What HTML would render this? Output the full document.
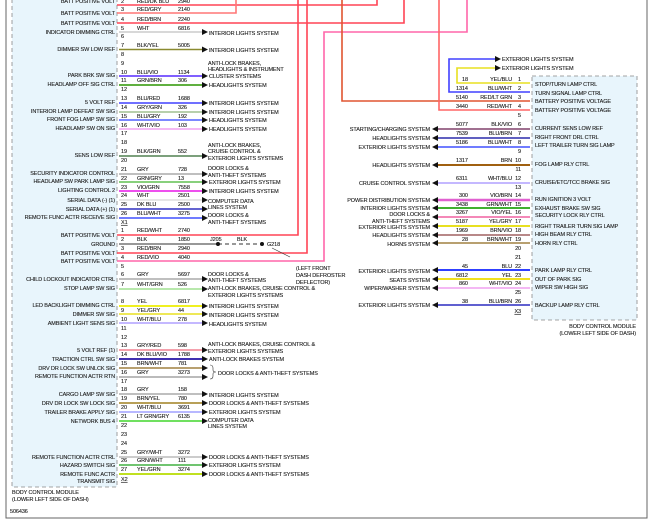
<!DOCTYPE html>
<html><head><meta charset="utf-8"><style>
html,body{margin:0;padding:0;background:#fff;width:650px;height:520px;overflow:hidden}
svg{display:block}
text{font-family:"Liberation Sans",sans-serif;font-size:5.5px;fill:#222;stroke:#222;stroke-width:0.12;letter-spacing:-0.1px}
.e{text-anchor:end}
.w{fill:none;stroke-width:1.6}
</style></head><body>
<svg width="650" height="520" viewBox="0 0 650 520" xmlns="http://www.w3.org/2000/svg">
<path d="M6 0V518H647V0" fill="none" stroke="#666" stroke-width="1"/>
<rect x="12" y="-2" width="105" height="489" fill="#e8f5fc" stroke="#888" stroke-dasharray="4,3" stroke-width="0.8"/>
<text x="12" y="494">BODY CONTROL MODULE</text>
<text x="12" y="501">(LOWER LEFT SIDE OF DASH)</text>
<text x="10" y="513">506436</text>
<rect x="532" y="76" width="105" height="244" fill="#e8f5fc" stroke="#888" stroke-dasharray="4,3" stroke-width="0.8"/>
<text class="e" x="636" y="328">BODY CONTROL MODULE</text>
<text class="e" x="636" y="335">(LOWER LEFT SIDE OF DASH)</text>

<g class="w" stroke="#f45">
<path d="M117 5H377V0"/>
<path d="M117 13H236V0" stroke="#f77"/>
<path d="M117 23H404V0"/>
<path d="M117 235H298V0"/>
<path d="M117 253H307V0"/>
<path d="M117 261H324V32H467V0" stroke="#f6a"/>
<path d="M342 0V101H530" stroke="#e05530"/>
<path d="M439 0V110H530" stroke="#f66"/>
</g>

<g>
<text class="e" x="115" y="3">BATT POSITIVE VOLT</text><text x="121" y="3">2</text><text x="137" y="3">RED/DK BLU</text><text x="178" y="3">2940</text>
<text class="e" x="115" y="15">BATT POSITIVE VOLT</text><text x="121" y="11">3</text><text x="137" y="11">RED/GRY</text><text x="178" y="11">2140</text>
<text class="e" x="115" y="25">BATT POSITIVE VOLT</text><text x="121" y="21">4</text><text x="137" y="21">RED/BRN</text><text x="178" y="21">2240</text>
</g>
<g class="w">
<path d="M119 32H203" stroke="#ccc"/>
<path d="M119 49.5H203" stroke="#8a8a30"/>
<path d="M119 76H203" stroke="#8060ff" stroke-width="2"/>
<path d="M119 85H203" stroke="#60b040" stroke-width="2"/>
<path d="M119 103H203" stroke="#4040ff"/>
<path d="M119 112H203" stroke="#a0c090"/>
<path d="M119 120H203" stroke="#5060ff"/>
<path d="M119 129H203" stroke="#f0a0f0"/>
<path d="M119 156H203" stroke="#508050"/>
<path d="M119 174H203" stroke="#aaa"/>
<path d="M119 182H203" stroke="#60c050"/>
<path d="M119 191H203" stroke="#ee50ee" stroke-width="2"/>
<path d="M119 200H203" stroke="#ddd"/>
<path d="M119 209H203" stroke="#3030c0"/>
<path d="M119 218H203" stroke="#4050ff"/>
<path d="M119 244H218" stroke="#777"/>
<path d="M218 244H262" stroke="#333" stroke-width="1" stroke-dasharray="4,3"/>
<path d="M119 279H203" stroke="#aaa"/>
<path d="M119 289H203" stroke="#a0e090"/>
<path d="M119 306H203" stroke="#f0f020" stroke-width="2"/>
<path d="M119 314H203" stroke="#e8e020"/>
<path d="M119 323H203" stroke="#b0a0ff"/>
<path d="M119 350H203" stroke="#f08090"/>
<path d="M119 359H203" stroke="#4030b0" stroke-width="2"/>
<path d="M119 368H203" stroke="#b8a070" stroke-width="2"/>
<path d="M119 377H203" stroke="#bbb" stroke-width="2"/>
<path d="M119 394H203" stroke="#aaa"/>
<path d="M119 403H203" stroke="#a08020"/>
<path d="M119 412H203" stroke="#a0a0ff"/>
<path d="M119 421H203" stroke="#70e060" stroke-width="2"/>
<path d="M119 457H203" stroke="#bbb"/>
<path d="M119 465H203" stroke="#40b040"/>
<path d="M119 474H203" stroke="#c0e020" stroke-width="2"/>
</g>
<g fill="#111">
<path d="M202 29l6 3-6 3z"/><path d="M202 46.5l6 3-6 3z"/><path d="M202 73l6 3-6 3z"/><path d="M202 82l6 3-6 3z"/>
<path d="M202 100l6 3-6 3z"/><path d="M202 109l6 3-6 3z"/><path d="M202 117l6 3-6 3z"/><path d="M202 126l6 3-6 3z"/>
<path d="M202 153l6 3-6 3z"/><path d="M202 171l6 3-6 3z"/><path d="M202 179l6 3-6 3z"/><path d="M202 188l6 3-6 3z"/>
<path d="M202 197l6 3-6 3z"/><path d="M202 206l6 3-6 3z"/><path d="M202 215l6 3-6 3z"/>
<circle cx="218" cy="244" r="2"/><circle cx="262" cy="244" r="2"/>
<path d="M202 276l6 3-6 3z"/><path d="M202 286l6 3-6 3z"/><path d="M202 303l6 3-6 3z"/><path d="M202 311l6 3-6 3z"/>
<path d="M202 320l6 3-6 3z"/><path d="M202 347l6 3-6 3z"/><path d="M202 356l6 3-6 3z"/><path d="M202 365l6 3-6 3z"/>
<path d="M202 374l6 3-6 3z"/><path d="M202 391l6 3-6 3z"/><path d="M202 400l6 3-6 3z"/><path d="M202 409l6 3-6 3z"/>
<path d="M202 418l6 3-6 3z"/><path d="M202 454l6 3-6 3z"/><path d="M202 462l6 3-6 3z"/><path d="M202 471l6 3-6 3z"/>
</g>
<path d="M210 365q3 0 3 3v2q0 2 3 2q-3 0-3 2v2q0 3-3 3" fill="none" stroke="#333" stroke-width="0.6"/>
<path d="M290 257L272 248" stroke="#333" stroke-width="0.6"/>
<text x="210" y="241">J205</text><text x="237" y="241">BLK</text><text x="267" y="246">G218</text>
<text x="296" y="270">(LEFT FRONT</text><text x="296" y="277">DASH DEFROSTER</text><text x="296" y="284">DEFLECTOR)</text>

<g>
<text class="e" x="115" y="34">INDICATOR DIMMING CTRL</text><text x="121" y="30">5</text><text x="137" y="30">WHT</text><text x="178" y="30">6816</text><text x="209" y="35">INTERIOR LIGHTS SYSTEM</text>
<text x="121" y="38">6</text>
<text class="e" x="115" y="51">DIMMER SW LOW REF</text><text x="121" y="47">7</text><text x="137" y="47">BLK/YEL</text><text x="178" y="47">5005</text><text x="209" y="52">INTERIOR LIGHTS SYSTEM</text>
<text x="121" y="56">8</text><text x="121" y="65">9</text>
<text class="e" x="115" y="77">PARK BRK SW SIG</text><text x="121" y="74">10</text><text x="137" y="74">BLU/VIO</text><text x="178" y="74">1134</text>
<text x="208" y="65">ANTI-LOCK BRAKES,</text><text x="208" y="71">HEADLIGHTS &amp; INSTRUMENT</text><text x="209" y="78">CLUSTER SYSTEMS</text>
<text class="e" x="115" y="86">HEADLAMP OFF SIG CTRL</text><text x="121" y="82">11</text><text x="137" y="82">GRN/BRN</text><text x="178" y="82">306</text><text x="209" y="87">HEADLIGHTS SYSTEM</text>
<text x="121" y="91">12</text>
<text class="e" x="115" y="104">5 VOLT REF</text><text x="121" y="100">13</text><text x="137" y="100">BLU/RED</text><text x="178" y="100">1688</text><text x="209" y="105">INTERIOR LIGHTS SYSTEM</text>
<text class="e" x="115" y="113">INTERIOR LAMP DEFEAT SW SIG</text><text x="121" y="109">14</text><text x="137" y="109">GRY/GRN</text><text x="178" y="109">326</text><text x="209" y="114">INTERIOR LIGHTS SYSTEM</text>
<text class="e" x="115" y="121">FRONT FOG LAMP SW SIG</text><text x="121" y="118">15</text><text x="137" y="118">BLU/GRY</text><text x="178" y="118">192</text><text x="209" y="122">HEADLIGHTS SYSTEM</text>
<text class="e" x="115" y="130">HEADLAMP SW ON SIG</text><text x="121" y="127">16</text><text x="137" y="127">WHT/VIO</text><text x="178" y="127">103</text><text x="209" y="131">HEADLIGHTS SYSTEM</text>
<text x="121" y="135">17</text><text x="121" y="144">18</text>
<text class="e" x="115" y="157">SENS LOW REF</text><text x="121" y="153">19</text><text x="137" y="153">BLK/GRN</text><text x="178" y="153">552</text>
<text x="208" y="147">ANTI-LOCK BRAKES,</text><text x="208" y="153">CRUISE CONTROL &amp;</text><text x="208" y="160">EXTERIOR LIGHTS SYSTEMS</text>
<text x="121" y="162">20</text>
<text class="e" x="115" y="175">SECURITY INDICATOR CONTROL</text><text x="121" y="171">21</text><text x="137" y="171">GRY</text><text x="178" y="171">728</text>
<text x="208" y="170">DOOR LOCKS &amp;</text><text x="208" y="177">ANTI-THEFT SYSTEMS</text>
<text class="e" x="115" y="183">HEADLAMP SW PARK LAMP SIG</text><text x="121" y="180">22</text><text x="137" y="180">GRN/GRY</text><text x="178" y="180">13</text><text x="209" y="184">EXTERIOR LIGHTS SYSTEM</text>
<text class="e" x="115" y="192">LIGHTING CONTROL 2</text><text x="121" y="189">23</text><text x="137" y="189">VIO/GRN</text><text x="178" y="189">7558</text><text x="209" y="193">INTERIOR LIGHTS SYSTEM</text>
<text class="e" x="115" y="202">SERIAL DATA (-) (1)</text><text x="121" y="197">24</text><text x="137" y="197">WHT</text><text x="178" y="197">2501</text><text x="208" y="203">COMPUTER DATA</text>
<text class="e" x="115" y="211">SERIAL DATA (+) (1)</text><text x="121" y="206">25</text><text x="137" y="206">DK BLU</text><text x="178" y="206">2500</text><text x="208" y="209">LINES SYSTEM</text>
<text class="e" x="115" y="219">REMOTE FUNC ACTR RECEIVE SIG</text><text x="121" y="215">26</text><text x="137" y="215">BLU/WHT</text><text x="178" y="215">3275</text>
<text x="208" y="217">DOOR LOCKS &amp;</text><text x="208" y="224">ANTI-THEFT SYSTEMS</text>
<text x="121" y="224" text-decoration="underline">X1</text>

<text class="e" x="115" y="237">BATT POSITIVE VOLT</text><text x="121" y="232">1</text><text x="137" y="232">RED/WHT</text><text x="178" y="232">2740</text>
<text class="e" x="115" y="246">GROUND</text><text x="121" y="241">2</text><text x="137" y="241">BLK</text><text x="178" y="241">1850</text>
<text class="e" x="115" y="255">BATT POSITIVE VOLT</text><text x="121" y="250">3</text><text x="137" y="250">RED/BRN</text><text x="178" y="250">2940</text>
<text class="e" x="115" y="263">BATT POSITIVE VOLT</text><text x="121" y="259">4</text><text x="137" y="259">RED/VIO</text><text x="178" y="259">4040</text>
<text x="121" y="268">5</text>
<text class="e" x="115" y="281">CHILD LOCKOUT INDICATOR CTRL</text><text x="121" y="276">6</text><text x="137" y="276">GRY</text><text x="178" y="276">5697</text>
<text x="208" y="276">DOOR LOCKS &amp;</text><text x="208" y="282">ANTI-THEFT SYSTEMS</text>
<text class="e" x="115" y="290">STOP LAMP SW SIG</text><text x="121" y="286">7</text><text x="137" y="286">WHT/GRN</text><text x="178" y="286">526</text>
<text x="208" y="290">ANTI-LOCK BRAKES, CRUISE CONTROL &amp;</text><text x="208" y="297">EXTERIOR LIGHTS SYSTEMS</text>
<text class="e" x="115" y="307">LED BACKLIGHT DIMMING CTRL</text><text x="121" y="303">8</text><text x="137" y="303">YEL</text><text x="178" y="303">6817</text><text x="209" y="308">INTERIOR LIGHTS SYSTEM</text>
<text class="e" x="115" y="316">DIMMER SW SIG</text><text x="121" y="312">9</text><text x="137" y="312">YEL/GRY</text><text x="178" y="312">44</text><text x="209" y="317">INTERIOR LIGHTS SYSTEM</text>
<text class="e" x="115" y="325">AMBIENT LIGHT SENS SIG</text><text x="121" y="321">10</text><text x="137" y="321">WHT/BLU</text><text x="178" y="321">278</text><text x="209" y="326">HEADLIGHTS SYSTEM</text>
<text x="121" y="330">11</text><text x="121" y="339">12</text>
<text class="e" x="115" y="352">5 VOLT REF (1)</text><text x="121" y="347">13</text><text x="137" y="347">GRY/RED</text><text x="178" y="347">598</text>
<text x="208" y="346">ANTI-LOCK BRAKES, CRUISE CONTROL &amp;</text><text x="208" y="353">EXTERIOR LIGHTS SYSTEMS</text>
<text class="e" x="115" y="361">TRACTION CTRL SW SIG</text><text x="121" y="356">14</text><text x="137" y="356">DK BLU/VIO</text><text x="178" y="356">1788</text><text x="209" y="361">ANTI-LOCK BRAKES SYSTEM</text>
<text class="e" x="115" y="370">DRV DR LOCK SW UNLCK SIG</text><text x="121" y="365">15</text><text x="137" y="365">BRN/WHT</text><text x="178" y="365">781</text>
<text class="e" x="115" y="378">REMOTE FUNCTION ACTR RTN</text><text x="121" y="374">16</text><text x="137" y="374">GRY</text><text x="178" y="374">3273</text>
<text x="218" y="375">DOOR LOCKS &amp; ANTI-THEFT SYSTEMS</text>
<text x="121" y="383">17</text>
<text class="e" x="115" y="396">CARGO LAMP SW SIG</text><text x="121" y="391">18</text><text x="137" y="391">GRY</text><text x="178" y="391">158</text><text x="209" y="397">INTERIOR LIGHTS SYSTEM</text>
<text class="e" x="115" y="405">DRV DR LOCK SW LOCK SIG</text><text x="121" y="400">19</text><text x="137" y="400">BRN/YEL</text><text x="178" y="400">780</text><text x="209" y="405">DOOR LOCKS &amp; ANTI-THEFT SYSTEMS</text>
<text class="e" x="115" y="414">TRAILER BRAKE APPLY SIG</text><text x="121" y="409">20</text><text x="137" y="409">WHT/BLU</text><text x="178" y="409">3691</text><text x="209" y="414">EXTERIOR LIGHTS SYSTEM</text>
<text class="e" x="115" y="423">NETWORK BUS 4</text><text x="121" y="418">21</text><text x="137" y="418">LT GRN/GRY</text><text x="178" y="418">6135</text>
<text x="208" y="422">COMPUTER DATA</text><text x="208" y="428">LINES SYSTEM</text>
<text x="121" y="427">22</text><text x="121" y="436">23</text><text x="121" y="445">24</text>
<text class="e" x="115" y="459">REMOTE FUNCTION ACTR CTRL</text><text x="121" y="454">25</text><text x="137" y="454">GRY/WHT</text><text x="178" y="454">3272</text><text x="209" y="459">DOOR LOCKS &amp; ANTI-THEFT SYSTEMS</text>
<text class="e" x="115" y="467">HAZARD SWITCH SIG</text><text x="121" y="462">26</text><text x="137" y="462">GRN/WHT</text><text x="178" y="462">111</text><text x="209" y="467">EXTERIOR LIGHTS SYSTEM</text>
<text class="e" x="115" y="476">REMOTE FUNC ACTR</text><text class="e" x="115" y="483">TRANSMIT SIG</text><text x="121" y="471">27</text><text x="137" y="471">YEL/GRN</text><text x="178" y="471">3274</text><text x="209" y="476">DOOR LOCKS &amp; ANTI-THEFT SYSTEMS</text>
<text x="121" y="481" text-decoration="underline">X2</text>
</g>

<g class="w">
<path d="M530 83H457V68H495" stroke="#e8e020"/>
<path d="M530 92H449V59H495" stroke="#4040ff"/>
<path d="M438 129H530" stroke="#a07090" stroke-width="2"/>
<path d="M438 138H530" stroke="#6060c0" stroke-width="2"/>
<path d="M438 147H530" stroke="#4050ff"/>
<path d="M438 165H530" stroke="#a06010" stroke-width="2"/>
<path d="M438 183H530" stroke="#b0a0ff"/>
<path d="M438 200H530" stroke="#e060d0" stroke-width="2.4"/>
<path d="M438 208H530" stroke="#40b030" stroke-width="2"/>
<path d="M438 217H530" stroke="#f060a0"/>
<path d="M438 226H530" stroke="#e8e020" stroke-width="2"/>
<path d="M438 235H530" stroke="#a06060"/>
<path d="M438 243H530" stroke="#b8a070" stroke-width="2"/>
<path d="M438 270H530" stroke="#3040ff" stroke-width="2"/>
<path d="M438 279H530" stroke="#f0e020" stroke-width="2"/>
<path d="M438 288H530" stroke="#f0a0f0"/>
<path d="M438 305H530" stroke="#6060d0" stroke-width="2"/>
</g>
<g fill="#111">
<path d="M495 56l6 3-6 3z"/><path d="M495 65l6 3-6 3z"/>
<path d="M438 126l-6 3 6 3z"/><path d="M438 135l-6 3 6 3z"/><path d="M438 144l-6 3 6 3z"/><path d="M438 162l-6 3 6 3z"/>
<path d="M438 180l-6 3 6 3z"/><path d="M438 197l-6 3 6 3z"/><path d="M438 205l-6 3 6 3z"/><path d="M438 214l-6 3 6 3z"/>
<path d="M438 223l-6 3 6 3z"/><path d="M438 232l-6 3 6 3z"/><path d="M438 240l-6 3 6 3z"/><path d="M438 267l-6 3 6 3z"/>
<path d="M438 276l-6 3 6 3z"/><path d="M438 285l-6 3 6 3z"/><path d="M438 302l-6 3 6 3z"/>
</g>
<g>
<text x="502" y="61">EXTERIOR LIGHTS SYSTEM</text><text x="502" y="70">EXTERIOR LIGHTS SYSTEM</text>
<text x="462" y="81">18</text><text class="e" x="512" y="81">YEL/BLU</text><text class="e" x="521" y="81">1</text><text x="535" y="86">STOP/TURN LAMP CTRL</text>
<text x="456" y="90">1314</text><text class="e" x="512" y="90">BLU/WHT</text><text class="e" x="521" y="90">2</text><text x="535" y="95">TURN SIGNAL LAMP CTRL</text>
<text x="456" y="99">5140</text><text class="e" x="512" y="99">RED/LT GRN</text><text class="e" x="521" y="99">3</text><text x="535" y="103">BATTERY POSITIVE VOLTAGE</text>
<text x="456" y="108">3440</text><text class="e" x="512" y="108">RED/WHT</text><text class="e" x="521" y="108">4</text><text x="535" y="112">BATTERY POSITIVE VOLTAGE</text>
<text class="e" x="521" y="117">5</text>
<text x="456" y="126">5077</text><text class="e" x="512" y="126">BLK/VIO</text><text class="e" x="521" y="126">6</text><text x="535" y="130">CURRENT SENS LOW REF</text><text class="e" x="430" y="131">STARTING/CHARGING SYSTEM</text>
<text x="456" y="135">7539</text><text class="e" x="512" y="135">BLU/BRN</text><text class="e" x="521" y="135">7</text><text x="535" y="139">RIGHT FRONT DRL CTRL</text><text class="e" x="430" y="140">HEADLIGHTS SYSTEM</text>
<text x="456" y="144">5186</text><text class="e" x="512" y="144">BLU/WHT</text><text class="e" x="521" y="144">8</text><text x="535" y="147">LEFT TRAILER TURN SIG LAMP</text><text class="e" x="430" y="149">EXTERIOR LIGHTS SYSTEM</text>
<text class="e" x="521" y="153">9</text>
<text x="456" y="162">1317</text><text class="e" x="512" y="162">BRN</text><text class="e" x="521" y="162">10</text><text x="535" y="166">FOG LAMP RLY CTRL</text><text class="e" x="430" y="167">HEADLIGHTS SYSTEM</text>
<text class="e" x="521" y="171">11</text>
<text x="456" y="180">6311</text><text class="e" x="512" y="180">WHT/BLU</text><text class="e" x="521" y="180">12</text><text x="535" y="184">CRUISE/ETC/TCC BRAKE SIG</text><text class="e" x="430" y="185">CRUISE CONTROL SYSTEM</text>
<text class="e" x="521" y="189">13</text>
<text x="459" y="197">300</text><text class="e" x="512" y="197">VIO/BRN</text><text class="e" x="521" y="197">14</text><text x="535" y="201">RUN IGNITION 3 VOLT</text><text class="e" x="430" y="202">POWER DISTRIBUTION SYSTEM</text>
<text x="456" y="206">3438</text><text class="e" x="512" y="206">GRN/WHT</text><text class="e" x="521" y="206">15</text><text x="535" y="210">EXHAUST BRAKE SW SIG</text><text class="e" x="430" y="210">INTERIOR LIGHTS SYSTEM</text>
<text x="456" y="214">3267</text><text class="e" x="512" y="214">VIO/YEL</text><text class="e" x="521" y="214">16</text><text x="535" y="217">SECURITY LOCK RLY CTRL</text><text class="e" x="430" y="216">DOOR LOCKS &amp;</text><text class="e" x="430" y="223">ANTI-THEFT SYSTEMS</text>
<text x="456" y="223">5187</text><text class="e" x="512" y="223">YEL/GRY</text><text class="e" x="521" y="223">17</text><text x="535" y="228">RIGHT TRAILER TURN SIG LAMP</text><text class="e" x="430" y="229">EXTERIOR LIGHTS SYSTEM</text>
<text x="456" y="232">1969</text><text class="e" x="512" y="232">BRN/VIO</text><text class="e" x="521" y="232">18</text><text x="535" y="236">HIGH BEAM RLY CTRL</text><text class="e" x="430" y="237">HEADLIGHTS SYSTEM</text>
<text x="462" y="241">28</text><text class="e" x="512" y="241">BRN/WHT</text><text class="e" x="521" y="241">19</text><text x="535" y="245">HORN RLY CTRL</text><text class="e" x="430" y="246">HORNS SYSTEM</text>
<text class="e" x="521" y="250">20</text><text class="e" x="521" y="259">21</text>
<text x="462" y="268">45</text><text class="e" x="512" y="268">BLU</text><text class="e" x="521" y="268">22</text><text x="535" y="272">PARK LAMP RLY CTRL</text><text class="e" x="430" y="273">EXTERIOR LIGHTS SYSTEM</text>
<text x="456" y="277">6812</text><text class="e" x="512" y="277">YEL</text><text class="e" x="521" y="277">23</text><text x="535" y="281">OUT OF PARK SIG</text><text class="e" x="430" y="282">SEATS SYSTEM</text>
<text x="459" y="285">860</text><text class="e" x="512" y="285">WHT/VIO</text><text class="e" x="521" y="285">24</text><text x="535" y="289">WIPER SW HIGH SIG</text><text class="e" x="430" y="290">WIPER/WASHER SYSTEM</text>
<text class="e" x="521" y="294">25</text>
<text x="462" y="303">38</text><text class="e" x="512" y="303">BLU/BRN</text><text class="e" x="521" y="303">26</text><text x="535" y="307">BACKUP LAMP RLY CTRL</text><text class="e" x="430" y="307">EXTERIOR LIGHTS SYSTEM</text>
<text class="e" x="521" y="313" text-decoration="underline">X3</text>
</g>
</svg>
</body></html>
